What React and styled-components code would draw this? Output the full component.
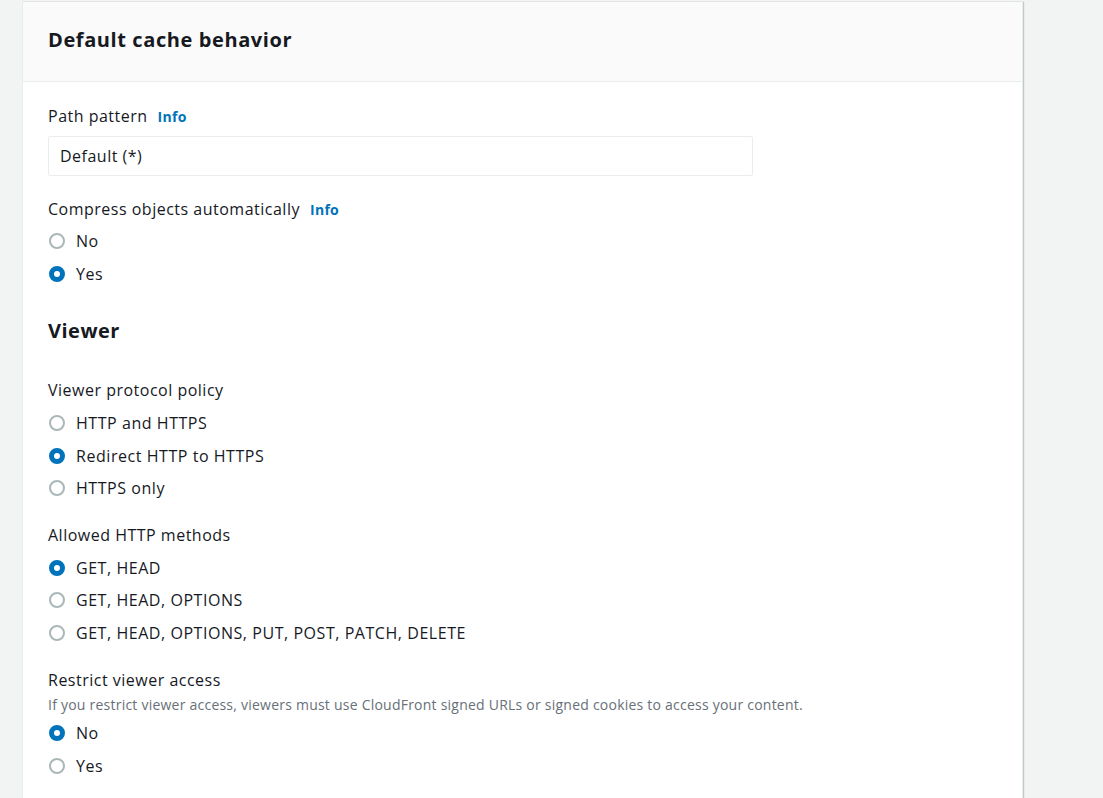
import React from 'react';
import styled, { createGlobalStyle } from 'styled-components';

const GlobalStyle = createGlobalStyle`
  html, body {
    margin: 0;
    padding: 0;
    background: #f2f3f3;
    font-family: "Open Sans", "Liberation Sans", Arial, sans-serif;
    color: #16191f;
  }
`;

const Page = styled.div`
  padding: 1px 0 0 22px;
  width: 1001px;
`;

const Card = styled.section`
  background: #fff;
  border: 1px solid #eaeded;
  border-top-color: #e3e5e5;
  box-shadow: 1px 1px 1px 0 rgba(0, 28, 36, 0.2);
  height: 820px;
`;

const Header = styled.header`
  background: #fafafa;
  border-bottom: 1px solid #eaeded;
  height: 80px;
  box-sizing: border-box;
  display: flex;
  align-items: center;
  padding: 0 25px 4px;
`;

const Title = styled.h2`
  margin: 0;
  font-size: 20px;
  line-height: 28px;
  font-weight: 700;
  letter-spacing: 0.6px;
`;

const Body = styled.div`
  padding: 23px 25px 0;
  display: flex;
  flex-direction: column;
`;

const Field = styled.div`
  display: flex;
  flex-direction: column;
  margin-bottom: ${({ $gap }) => $gap || 0}px;
`;

const Label = styled.div`
  display: flex;
  align-items: baseline;
  gap: 10px;
  font-size: 16px;
  line-height: 22px;
  letter-spacing: 0.5px;
`;

const Info = styled.a`
  font-size: 14px;
  font-weight: 700;
  letter-spacing: 0.3px;
  color: #0073bb;
  text-decoration: none;
`;

const Description = styled.div`
  font-size: 14px;
  line-height: 20px;
  letter-spacing: 0.23px;
  color: #687078;
  margin-top: 4px;
`;

const Input = styled.div`
  margin-top: 8px;
  width: 705px;
  height: 40px;
  box-sizing: border-box;
  border: 1px solid #eaeded;
  border-radius: 2px;
  display: flex;
  align-items: center;
  padding: 0 11px;
  font-size: 16px;
  letter-spacing: 0.5px;
`;

const Options = styled.div`
  display: flex;
  flex-direction: column;
  margin-top: ${({ $top }) => $top ?? 6}px;
`;

const Option = styled.label`
  display: flex;
  align-items: center;
  gap: 11px;
  height: 32.5px;
  font-size: 16px;
  line-height: 22px;
  letter-spacing: 0.55px;
`;

const Dot = styled.span`
  flex: none;
  width: 16px;
  height: 16px;
  box-sizing: border-box;
  border-radius: 50%;
  margin-left: 1px;
  border: ${({ $on }) => ($on ? '5px solid #0073bb' : '2px solid #aab7b8')};
  background: #fff;
`;

const Heading = styled.h3`
  margin: 0;
  font-size: 20px;
  font-weight: 700;
  line-height: 28px;
  letter-spacing: 0.5px;
`;

const Radio = ({ label, checked }) => (
  <Option>
    <Dot $on={checked} />
    {label}
  </Option>
);

export default function App() {
  return (
    <>
      <GlobalStyle />
      <Page>
        <Card>
          <Header>
            <Title>Default cache behavior</Title>
          </Header>
          <Body>
            <Field $gap={22}>
              <Label>
                Path pattern <Info href="#">Info</Info>
              </Label>
              <Input>Default (*)</Input>
            </Field>

            <Field $gap={27}>
              <Label>
                Compress objects automatically <Info href="#">Info</Info>
              </Label>
              <Options $top={4}>
                <Radio label="No" />
                <Radio label="Yes" checked />
              </Options>
            </Field>

            <Field $gap={34}>
              <Heading>Viewer</Heading>
            </Field>

            <Field $gap={19}>
              <Label>Viewer protocol policy</Label>
              <Options>
                <Radio label="HTTP and HTTPS" />
                <Radio label="Redirect HTTP to HTTPS" checked />
                <Radio label="HTTPS only" />
              </Options>
            </Field>

            <Field $gap={20}>
              <Label>Allowed HTTP methods</Label>
              <Options>
                <Radio label="GET, HEAD" checked />
                <Radio label="GET, HEAD, OPTIONS" />
                <Radio label="GET, HEAD, OPTIONS, PUT, POST, PATCH, DELETE" />
              </Options>
            </Field>

            <Field>
              <Label>Restrict viewer access</Label>
              <Description>
                If you restrict viewer access, viewers must use CloudFront signed URLs or signed cookies to access your content.
              </Description>
              <Options $top={2}>
                <Radio label="No" checked />
                <Radio label="Yes" />
              </Options>
            </Field>
          </Body>
        </Card>
      </Page>
    </>
  );
}
